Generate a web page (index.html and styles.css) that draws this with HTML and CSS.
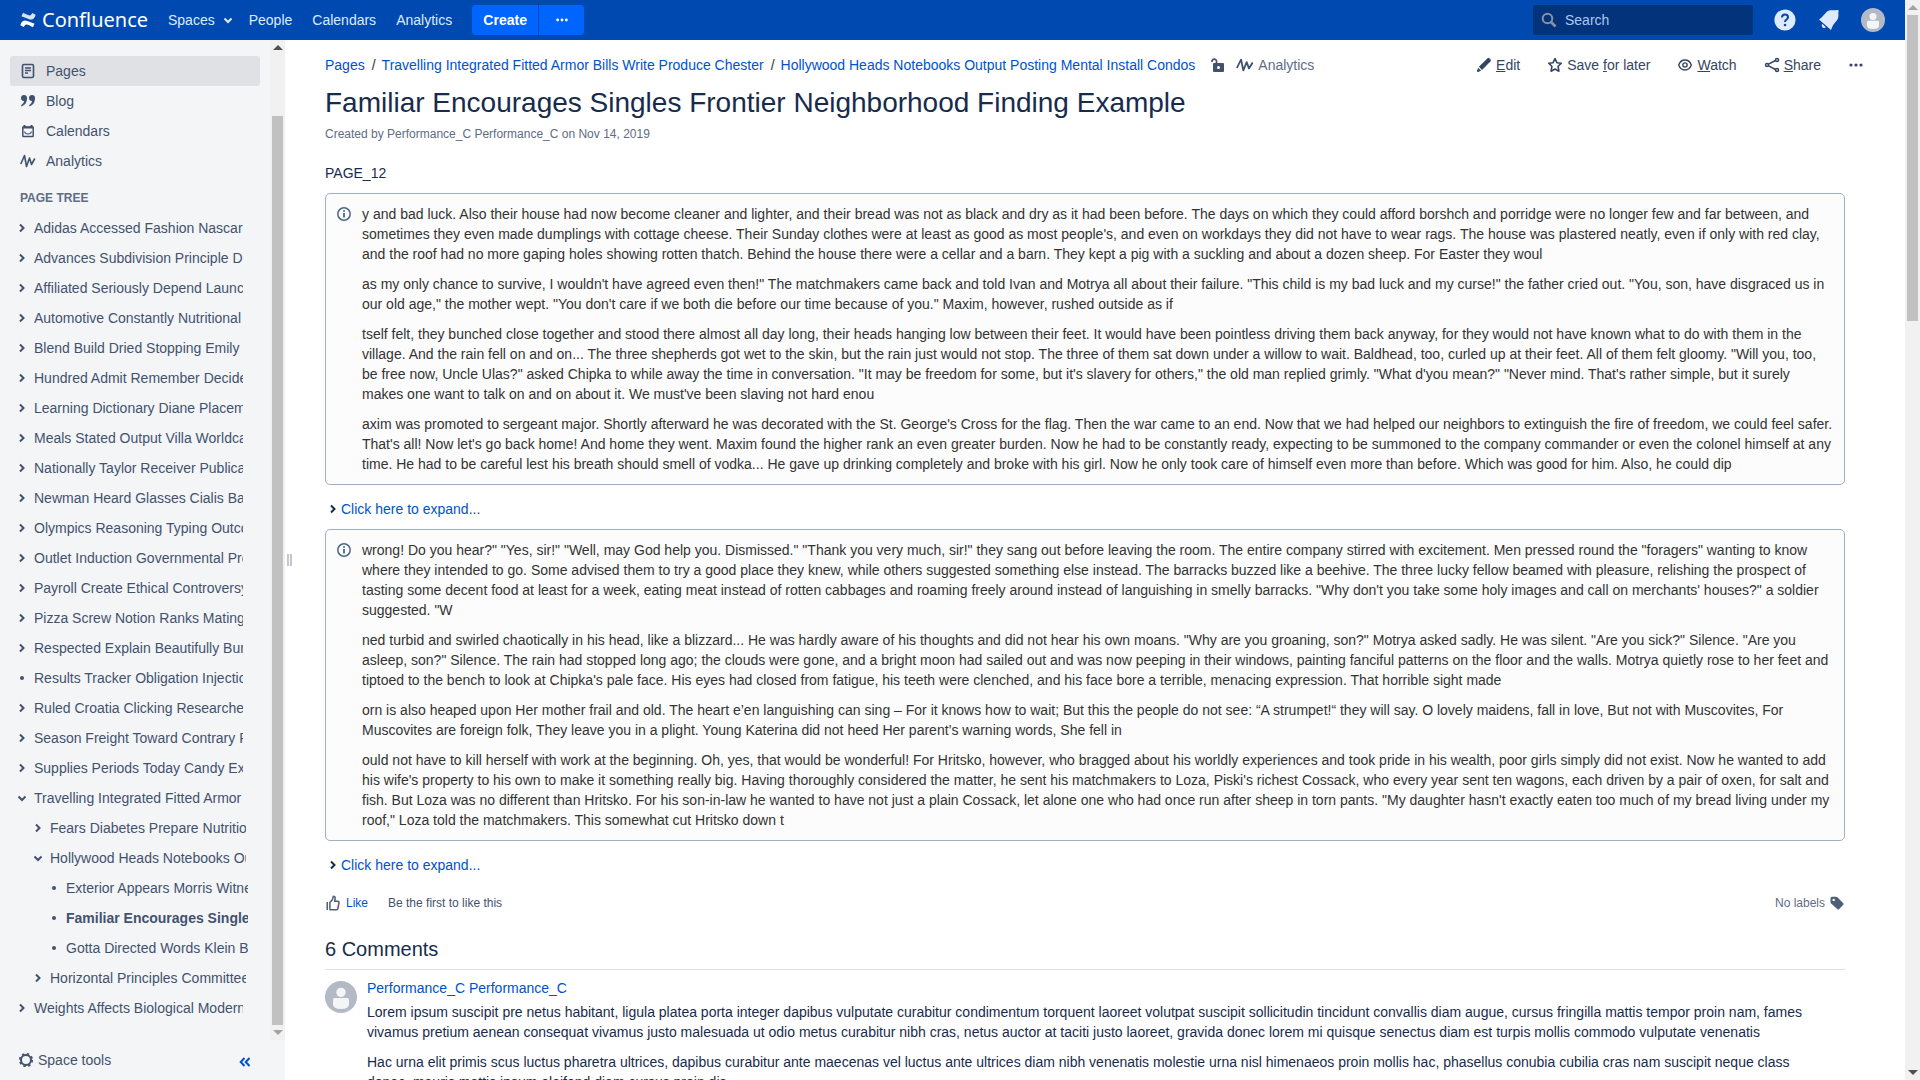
FILE: index.html
```html
<!DOCTYPE html>
<html lang="en">
<head>
<meta charset="utf-8">
<title>Familiar Encourages Singles Frontier Neighborhood Finding Example - Confluence</title>
<link rel="stylesheet" href="styles.css">
</head>
<body>
<svg class="defs" aria-hidden="true">
  <symbol id="right" viewBox="0 0 10 10"><path d="M3 1.5 6.5 5 3 8.5" fill="none" stroke="currentColor" stroke-width="2"/></symbol>
  <symbol id="down" viewBox="0 0 10 10"><path d="M1.5 3.5 5 7 8.5 3.500" fill="none" stroke="currentColor" stroke-width="2"/></symbol>
  <symbol id="dot" viewBox="0 0 10 10"><circle cx="5" cy="5" r="2" fill="currentColor"/></symbol>
  <symbol id="pulse" viewBox="0 0 16 16"><path d="M1 10.500 4.500 2.500 6.500 13.500 9.500 5 11.500 11.500 14.500 6" fill="none" stroke="currentColor" stroke-width="1.600" stroke-linecap="round" stroke-linejoin="round"/></symbol>
  <symbol id="more" viewBox="0 0 16 16"><g fill="currentColor"><circle cx="3" cy="8" r="1.600"/><circle cx="8" cy="8" r="1.600"/><circle cx="13" cy="8" r="1.600"/></g></symbol>
  <symbol id="person" viewBox="0 0 24 24"><circle cx="12" cy="12" r="12" fill="#b3bac5"/><circle cx="12" cy="8.500" r="3.500" fill="#f4f5f7"/><path d="M6 14q0-1.300 1.300-1.300h9.400q1.300 0 1.300 1.300v3.500q0 3.500-6 3.500t-6-3.500z" fill="#f4f5f7"/></symbol>
  <symbol id="info" viewBox="0 0 16 16"><circle cx="8" cy="8" r="6.200" fill="none" stroke="currentColor" stroke-width="1.500"/><path d="M8 7v4.500" stroke="currentColor" stroke-width="1.800"/><circle cx="8" cy="4.900" r="1" fill="currentColor"/></symbol>
</svg>
<div class="app">
<div class="shell">
  <header class="topbar">
    <a class="logo" href="#"><svg width="16" height="16" viewBox="0 0 16 16"><path d="M1 11.200C3 8 5 7.800 8 9.300l6.600 2.500-1.700 3.400C9 13.500 6.500 11.400 4.700 13.500L3.700 15 .4 13.300z" fill="#fff"/><path d="M15 4.800C13 8 11 8.200 8 6.700L1.400 4.200 3.100.8C7 2.500 9.500 4.600 11.300 2.500L12.300 1l3.300 1.700z" fill="#fff" opacity=".85"/></svg><span>Confluence</span></a>
    <nav class="topnav"><a class="spaces" href="#">Spaces <svg width="10" height="10"><use href="#down"/></svg></a><a href="#">People</a><a href="#">Calendars</a><a href="#">Analytics</a></nav>
    <div class="create"><button type="button">Create</button><button type="button" aria-label="Create from template"><svg width="14" height="14"><use href="#more"/></svg></button></div>
    <label class="search"><svg width="16" height="16" viewBox="0 0 16 16"><circle cx="6.500" cy="6.500" r="4.800" fill="none" stroke="currentColor" stroke-width="2"/><path d="m10 10 4.500 4.500" stroke="currentColor" stroke-width="2.600"/></svg><input type="text" placeholder="Search" aria-label="Search"></label>
    <div class="user">
      <a href="#" aria-label="Help"><svg width="24" height="24" viewBox="0 0 24 24"><circle cx="12" cy="12" r="10.600" fill="#deebff"/><path d="M9 9.500C9 7.500 10.200 6.500 12 6.500S15 7.600 15 9.200C15 11.500 12 11.500 12 14" fill="none" stroke="#0049b0" stroke-width="2"/><circle cx="12" cy="17" r="1.300" fill="#0049b0"/></svg></a>
      <a href="#" aria-label="Notifications"><svg width="24" height="24" viewBox="0 0 24 24"><path d="M2 11.500C5.500 9 7 6.500 9.500 4c1.500-1.500 3.500-2 6-1.700 2.500.2 4.500-.6 5.500-.3.800.5.800 1.500.3 2.500.4 4.500.2 6.500-2.800 9.500-2.500 2.500-3.300 5-4.500 8zM5.200 15.800l3.600 3.400q-1.200 1.300-2.800.6-2-1.300-.8-4z" fill="#deebff"/></svg></a>
      <a href="#" aria-label="Profile"><svg width="24" height="24"><use href="#person"/></svg></a>
    </div>
  </header>
  <div class="body">
    <aside class="sidebar">
      <div class="scroller">
        <div class="side">
          <nav class="sections">
            <a class="on" href="#"><svg width="16" height="16" viewBox="0 0 16 16"><rect x="2.500" y="1.500" width="11" height="13" rx="1.500" fill="none" stroke="currentColor" stroke-width="1.600"/><path d="M5 5h6M5 7.500h6M5 10h3" stroke="currentColor" stroke-width="1.300"/></svg>Pages</a>
            <a href="#"><svg width="16" height="16" viewBox="0 0 16 16"><path d="M1 5a3 3 0 1 1 6 0c0 4-1.500 7-5.500 8.500L1 12.300c2-1.300 2.800-2.600 3-4.300A3 3 0 0 1 1 5zm8 0a3 3 0 1 1 6 0c0 4-1.500 7-5.500 8.500L9 12.300c2-1.300 2.800-2.600 3-4.300A3 3 0 0 1 9 5z" fill="currentColor"/></svg>Blog</a>
            <a href="#"><svg width="16" height="16" viewBox="0 0 16 16"><rect x="2.800" y="4" width="10.400" height="9.500" rx=".5" fill="none" stroke="currentColor" stroke-width="1.500"/><path d="M3 4.500h10M4.500 2v3M11.500 2v3" stroke="currentColor" stroke-width="2"/><path d="M4.500 8.500Q5 11 8 11t3.500-2.500" fill="none" stroke="currentColor" stroke-width="1.200"/></svg>Calendars</a>
            <a href="#"><svg width="16" height="16"><use href="#pulse"/></svg>Analytics</a>
          </nav>
          <h2>PAGE TREE</h2>
          <ul class="tree">
            <li><a href="#"><svg><use href="#right"/></svg><span>Adidas Accessed Fashion Nascar</span></a></li>
            <li><a href="#"><svg><use href="#right"/></svg><span>Advances Subdivision Principle D</span></a></li>
            <li><a href="#"><svg><use href="#right"/></svg><span>Affiliated Seriously Depend Launc</span></a></li>
            <li><a href="#"><svg><use href="#right"/></svg><span>Automotive Constantly Nutritional</span></a></li>
            <li><a href="#"><svg><use href="#right"/></svg><span>Blend Build Dried Stopping Emily</span></a></li>
            <li><a href="#"><svg><use href="#right"/></svg><span>Hundred Admit Remember Decide</span></a></li>
            <li><a href="#"><svg><use href="#right"/></svg><span>Learning Dictionary Diane Placem</span></a></li>
            <li><a href="#"><svg><use href="#right"/></svg><span>Meals Stated Output Villa Worldca</span></a></li>
            <li><a href="#"><svg><use href="#right"/></svg><span>Nationally Taylor Receiver Publica</span></a></li>
            <li><a href="#"><svg><use href="#right"/></svg><span>Newman Heard Glasses Cialis Ba</span></a></li>
            <li><a href="#"><svg><use href="#right"/></svg><span>Olympics Reasoning Typing Outco</span></a></li>
            <li><a href="#"><svg><use href="#right"/></svg><span>Outlet Induction Governmental Pro</span></a></li>
            <li><a href="#"><svg><use href="#right"/></svg><span>Payroll Create Ethical Controversy</span></a></li>
            <li><a href="#"><svg><use href="#right"/></svg><span>Pizza Screw Notion Ranks Mating</span></a></li>
            <li><a href="#"><svg><use href="#right"/></svg><span>Respected Explain Beautifully Bur</span></a></li>
            <li><a href="#"><svg><use href="#dot"/></svg><span>Results Tracker Obligation Injectio</span></a></li>
            <li><a href="#"><svg><use href="#right"/></svg><span>Ruled Croatia Clicking Researche</span></a></li>
            <li><a href="#"><svg><use href="#right"/></svg><span>Season Freight Toward Contrary P</span></a></li>
            <li><a href="#"><svg><use href="#right"/></svg><span>Supplies Periods Today Candy Ex</span></a></li>
            <li><a href="#"><svg><use href="#down"/></svg><span>Travelling Integrated Fitted Armor</span></a>
              <ul>
                <li><a href="#"><svg><use href="#right"/></svg><span>Fears Diabetes Prepare Nutritio</span></a></li>
                <li><a href="#"><svg><use href="#down"/></svg><span>Hollywood Heads Notebooks Ou</span></a>
                  <ul>
                    <li><a href="#"><svg><use href="#dot"/></svg><span>Exterior Appears Morris Witne</span></a></li>
                    <li><a class="current" href="#"><svg><use href="#dot"/></svg><span>Familiar Encourages Single</span></a></li>
                    <li><a href="#"><svg><use href="#dot"/></svg><span>Gotta Directed Words Klein B</span></a></li>
                  </ul></li>
                <li><a href="#"><svg><use href="#right"/></svg><span>Horizontal Principles Committee</span></a></li>
              </ul></li>
            <li><a href="#"><svg><use href="#right"/></svg><span>Weights Affects Biological Modern</span></a></li>
          </ul>
        </div>
        <div class="bar side-bar"><i class="up"></i><i class="thumb"></i><i class="dn idle"></i></div>
      </div>
      <footer class="tools">
        <button type="button"><svg width="16" height="16" viewBox="0 0 16 16"><circle cx="8" cy="8" r="5" fill="none" stroke="currentColor" stroke-width="2"/><circle cx="8" cy="8" r="6.300" fill="none" stroke="currentColor" stroke-width="1.600" stroke-dasharray="2.474 2.474"/></svg>Space tools</button>
        <button class="collapse" type="button" aria-label="Collapse sidebar"><svg width="12" height="10" viewBox="0 0 12 10"><path d="M5.500 1 1.700 5l3.800 4M10.500 1 6.700 5l3.800 4" fill="none" stroke="currentColor" stroke-width="2"/></svg></button>
      </footer>
    </aside>
    <div class="splitter"><i></i><i></i></div>
    <main>
      <div class="pagehead">
        <nav class="crumbs"><a href="#">Pages</a><b>/</b><a href="#">Travelling Integrated Fitted Armor Bills Write Produce Chester</a><b>/</b><a href="#">Hollywood Heads Notebooks Output Posting Mental Install Condos</a>
          <a class="lock" href="#" aria-label="Unrestricted"><svg width="16" height="16" viewBox="0 0 16 16"><path d="M2 5V3.700A2.400 2.400 0 0 1 6.500 3.700V7" fill="none" stroke="currentColor" stroke-width="1.700"/><path fill-rule="evenodd" d="M4 6h9q1 0 1 1v7q0 1-1 1H4q-1 0-1-1V7q0-1 1-1zm4.500 3a1.500 1.500 0 1 0 0 3 1.500 1.500 0 0 0 0-3z" fill="currentColor"/></svg></a>
          <a class="stats" href="#"><svg width="18" height="16" viewBox="0 0 16 16" preserveAspectRatio="none"><use href="#pulse"/></svg>Analytics</a></nav>
        <div class="actions">
          <a href="#"><svg width="16" height="16" viewBox="0 0 16 16"><path d="m10.300 2.400 1.200-1.200q.9-.7 1.800 0l1.300 1.300q.7.900 0 1.800l-1.200 1.200L6 12.900l-3.100-3.100zM2.200 10.800l2.900 2.900L2 14.900q-1.200.2-1-1z" fill="currentColor"/></svg><span><u>E</u>dit</span></a>
          <a href="#"><svg width="16" height="16" viewBox="0 0 16 16"><path d="m8 1.600 1.900 4.100 4.400.5-3.200 3.100.8 4.900L8 12l-3.900 2.200.8-4.900L1.700 6.200l4.400-.5z" fill="none" stroke="currentColor" stroke-width="1.600" stroke-linejoin="round"/></svg><span>Save <u>f</u>or later</span></a>
          <a href="#"><svg width="16" height="16" viewBox="0 0 16 16"><path d="M1.700 8Q3.500 3 8 3t6.300 5Q12.500 13 8 13T1.700 8z" fill="none" stroke="currentColor" stroke-width="1.400"/><circle cx="8" cy="8" r="2.100" fill="none" stroke="currentColor" stroke-width="1.400"/></svg><span><u>W</u>atch</span></a>
          <a href="#"><svg width="16" height="16" viewBox="0 0 16 16"><g fill="none" stroke="currentColor" stroke-width="1.500"><path d="m4.500 7.200 7-3.700m-7 5.300 7 3.700"/><circle cx="3" cy="8" r="1.500"/><circle cx="13" cy="3" r="1.500"/><circle cx="13" cy="13" r="1.500"/></g></svg><span><u>S</u>hare</span></a>
          <button type="button" aria-label="More actions"><svg width="16" height="16"><use href="#more"/></svg></button>
        </div>
      </div>
      <h1>Familiar Encourages Singles Frontier Neighborhood Finding Example</h1>
      <p class="meta">Created by Performance_C Performance_C on Nov 14, 2019</p>
      <p class="intro">PAGE_12</p>
      <section class="panel"><svg width="16" height="16"><use href="#info"/></svg><div>
        <p>y and bad luck. Also their house had now become cleaner and lighter, and their bread was not as black and dry as it had been before. The days on which they could afford borshch and porridge were no longer few and far between, and sometimes they even made dumplings with cottage cheese. Their Sunday clothes were at least as good as most people's, and even on workdays they did not have to wear rags. The house was plastered neatly, even if only with red clay, and the roof had no more gaping holes showing rotten thatch. Behind the house there were a cellar and a barn. They kept a pig with a suckling and about a dozen sheep. For Easter they woul</p>
        <p>as my only chance to survive, I wouldn't have agreed even then!" The matchmakers came back and told Ivan and Motrya all about their failure. "This child is my bad luck and my curse!" the father cried out. "You, son, have disgraced us in our old age," the mother wept. "You don't care if we both die before our time because of you." Maxim, however, rushed outside as if</p>
        <p>tself felt, they bunched close together and stood there almost all day long, their heads hanging low between their feet. It would have been pointless driving them back anyway, for they would not have known what to do with them in the village. And the rain fell on and on... The three shepherds got wet to the skin, but the rain just would not stop. The three of them sat down under a willow to wait. Baldhead, too, curled up at their feet. All of them felt gloomy. "Will you, too, be free now, Uncle Ulas?" asked Chipka to while away the time in conversation. "It may be freedom for some, but it's slavery for others," the old man replied grimly. "What d'you mean?" "Never mind. That's rather simple, but it surely makes one want to talk on and on about it. We must've been slaving not hard enou</p>
        <p>axim was promoted to sergeant major. Shortly afterward he was decorated with the St. George's Cross for the flag. Then the war came to an end. Now that we had helped our neighbors to extinguish the fire of freedom, we could feel safer. That's all! Now let's go back home! And home they went. Maxim found the higher rank an even greater burden. Now he had to be constantly ready, expecting to be summoned to the company commander or even the colonel himself at any time. He had to be careful lest his breath should smell of vodka... He gave up drinking completely and broke with his girl. Now he only took care of himself even more than before. Which was good for him. Also, he could dip</p>
      </div></section>
      <button class="expand" type="button"><svg width="10" height="10"><use href="#right"/></svg>Click here to expand...</button>
      <section class="panel"><svg width="16" height="16"><use href="#info"/></svg><div>
        <p>wrong! Do you hear?" "Yes, sir!" "Well, may God help you. Dismissed." "Thank you very much, sir!" they sang out before leaving the room. The entire company stirred with excitement. Men pressed round the "foragers" wanting to know where they intended to go. Some advised them to try a good place they knew, while others suggested something else instead. The barracks buzzed like a beehive. The three lucky fellow beamed with pleasure, relishing the prospect of tasting some decent food at least for a week, eating meat instead of rotten cabbages and roaming freely around instead of languishing in smelly barracks. "Why don't you take some holy images and call on merchants' houses?" a soldier suggested. "W</p>
        <p>ned turbid and swirled chaotically in his head, like a blizzard... He was hardly aware of his thoughts and did not hear his own moans. "Why are you groaning, son?" Motrya asked sadly. He was silent. "Are you sick?" Silence. "Are you asleep, son?" Silence. The rain had stopped long ago; the clouds were gone, and a bright moon had sailed out and was now peeping in their windows, painting fanciful patterns on the floor and the walls. Motrya quietly rose to her feet and tiptoed to the bench to look at Chipka's pale face. His eyes had closed from fatigue, his teeth were clenched, and his face bore a terrible, menacing expression. That horrible sight made</p>
        <p>orn is also heaped upon Her mother frail and old. The heart e’en languishing can sing – For it knows how to wait; But this the people do not see: “A strumpet!“ they will say. O lovely maidens, fall in love, But not with Muscovites, For Muscovites are foreign folk, They leave you in a plight. Young Katerina did not heed Her parent’s warning words, She fell in</p>
        <p>ould not have to kill herself with work at the beginning. Oh, yes, that would be wonderful! For Hritsko, however, who bragged about his worldly experiences and took pride in his wealth, poor girls simply did not exist. Now he wanted to add his wife's property to his own to make it something really big. Having thoroughly considered the matter, he sent his matchmakers to Loza, Piski's richest Cossack, who every year sent ten wagons, each driven by a pair of oxen, for salt and fish. But Loza was no different than Hritsko. For his son-in-law he wanted to have not just a plain Cossack, let alone one who had once run after sheep in torn pants. "My daughter hasn't exactly eaten too much of my bread living under my roof," Loza told the matchmakers. This somewhat cut Hritsko down t</p>
      </div></section>
      <button class="expand" type="button"><svg width="10" height="10"><use href="#right"/></svg>Click here to expand...</button>
      <div class="likes">
        <a href="#"><svg width="16" height="16" viewBox="0 0 16 18"><path d="M1.500 8v9M4.500 16V8.500L7.500 5l.8-3.500q2.200 0 2.200 2.300L9.800 7h3.700q1.500.2 1.200 1.700l-1.200 6.500q-.3 1.300-1.500 1.300H5q-.5 0-.5-.5z" fill="none" stroke="currentColor" stroke-width="1.700" stroke-linejoin="round"/></svg>Like</a>
        <span>Be the first to like this</span>
        <span class="labels">No labels <svg width="16" height="16" viewBox="0 0 16 16"><path fill-rule="evenodd" d="M1.500 3.200Q1.500 1.700 3 1.700h4q.8 0 1.400.6l5.700 5.700q1 1 0 2l-3.900 3.900q-1 1-2 0L2.100 8.600q-.6-.6-.6-1.400zM4.700 3.700a1.200 1.200 0 1 0 0 2.400 1.200 1.200 0 0 0 0-2.400z" fill="currentColor"/></svg></span>
      </div>
      <h2 class="count">6 Comments</h2>
      <article class="comment"><svg width="32" height="32" viewBox="0 0 24 24"><use href="#person"/></svg><div>
        <a href="#">Performance_C Performance_C</a>
        <p>Lorem ipsum suscipit pre netus habitant, ligula platea porta integer dapibus vulputate curabitur condimentum torquent laoreet volutpat suscipit sollicitudin tincidunt convallis diam augue, cursus fringilla mattis tempor proin nam, fames vivamus pretium aenean consequat vivamus justo malesuada ut odio metus curabitur nibh cras, netus auctor at taciti justo laoreet, gravida donec lorem mi quisque senectus diam est turpis mollis commodo vulputate venenatis</p>
        <p>Hac urna elit primis scus luctus pharetra ultrices, dapibus curabitur ante maecenas vel luctus ante ultrices diam nibh venenatis molestie urna nisl himenaeos proin mollis hac, phasellus conubia cubilia cras nam suscipit neque class donec, mauris mattis ipsum eleifend diam cursus proin dis</p>
      </div></article>
    </main>
  </div>
</div>
<div class="bar page-bar"><i class="up idle"></i><i class="thumb"></i><i class="dn"></i></div>
</div>
</body>
</html>
```
FILE: styles.css
```css
* { box-sizing: border-box; }
body { margin: 0; background: #fff; color: #172b4d; font: 14px/20px "Liberation Sans", Arial, sans-serif; }
p, h1, h2, ul { margin: 0; padding: 0; font-weight: 400; }
ul { list-style: none; }
a { color: #0052cc; text-decoration: none; }
button { border: 0; padding: 0; background: none; font: inherit; color: inherit; }
svg { flex: none; }
.defs { display: none; }
.app { display: flex; height: 100vh; overflow: hidden; }
.shell { flex: 1; min-width: 0; display: flex; flex-direction: column; }

/* Header */
.topbar { flex: none; display: flex; align-items: center; height: 40px; padding: 0 20px; background: #0049b0; }
.logo { display: flex; align-items: center; gap: 6px; width: 148px; color: #fff; font: 20px/24px "Noto Sans", sans-serif; }
.topnav { display: flex; gap: 20px; }
.topnav a { display: flex; align-items: center; color: #deebff; }
.topnav .spaces { gap: 8px; margin-right: -4px; }
.create { display: flex; gap: 1px; margin-left: 20px; }
.create button { display: grid; place-items: center; width: 45px; height: 30px; background: #0065ff; color: #fff; border-radius: 0 3px 3px 0; }
.create button:first-child { width: 66px; font-weight: 700; border-radius: 3px 0 0 3px; }
.search { display: flex; align-items: center; gap: 8px; width: 220px; height: 30px; margin-left: auto; padding: 0 8px; border-radius: 3px; background: #03337a; color: #8792a5; }
.search input { flex: 1; min-width: 0; border: 0; padding: 0; background: none; color: #b3d4ff; font: inherit; }
.search input::placeholder { color: #abc8f2; opacity: 1; }
.user { display: flex; gap: 20px; margin-left: 20px; }
.user a { display: flex; }

/* Sidebar */
.body { flex: 1; min-height: 0; display: flex; }
.sidebar { flex: none; display: flex; flex-direction: column; width: 285px; background: #f4f5f7; color: #42526e; }
.scroller { flex: 1; min-height: 0; display: flex; overflow: hidden; }
.side { flex: 1; min-width: 0; padding: 16px 10px 0; }
.sections a { display: flex; align-items: center; gap: 10px; height: 30px; padding: 0 10px; border-radius: 3px; color: #42526e; }
.sections .on { background: #dfe1e5; }
.side h2 { padding: 12px 10px 5px; color: #5e6c84; font-size: 12px; font-weight: 700; }
.tree a { display: flex; align-items: center; gap: 7px; height: 30px; padding-left: 7px; color: #42526e; }
.tree svg { width: 10px; height: 10px; }
.tree span { width: 209px; overflow: hidden; white-space: nowrap; }
.tree ul { padding-left: 16px; }
.tree ul span { width: 196px; }
.tree ul ul span { width: 182px; }
.tree .current { font-weight: 700; }
.tools { display: flex; justify-content: space-between; height: 40px; padding: 0 34px 0 18px; }
.tools button { display: flex; align-items: center; gap: 4px; }
.tools .collapse { padding-top: 4px; color: #0052cc; }
.splitter { flex: none; display: flex; align-items: center; justify-content: center; gap: 1px; width: 9px; }
.splitter i { width: 2px; height: 12px; background: #c1c7d0; }

/* Scroll bars */
.bar { flex: none; display: flex; flex-direction: column; align-items: center; width: 15px; padding: 5px 0; background: #f1f1f1; }
.bar i { width: 0; border: 5px solid transparent; }
.bar .up { margin-bottom: 5px; border-top-width: 0; border-bottom-color: #505050; }
.bar .dn { margin-top: 5px; border-bottom-width: 0; border-top-color: #505050; }
.bar .up.idle { border-bottom-color: #a3a3a3; }
.bar .dn.idle { border-top-color: #a3a3a3; }
.bar .thumb { width: 11px; border: 0; background: #c1c1c1; }
.side-bar .up { margin-bottom: 66px; }
.side-bar .thumb { flex: 1; }
.page-bar .thumb { height: 306px; }
.page-bar .dn { margin-top: auto; }

/* Page */
main { flex: 1; min-width: 0; padding: 15px 60px 0 31px; overflow: hidden; }
.pagehead { display: flex; justify-content: space-between; height: 20px; margin-right: -19px; }
.crumbs, .actions, .crumbs a, .actions a, .actions button { display: flex; align-items: center; }
.crumbs b { padding: 0 6px 0 7px; font-weight: 400; color: #333; }
.crumbs .lock { margin: 0 10px 0 15px; color: #42526e; }
.crumbs .stats { gap: 4px; color: #5e6c84; }
.crumbs .stats svg { color: #42526e; }
.actions { gap: 27px; color: #344563; }
.actions a { gap: 4px; color: #344563; }
h1 { margin-top: 13px; font-size: 28px; line-height: 30px; }
.meta { margin-top: 6px; color: #5e6c84; font-size: 12px; }
.intro { margin-top: 19px; }
.panel { display: flex; gap: 10px; margin-top: 10px; padding: 10px; border: 1px solid #a0b0c4; border-radius: 5px; background: #fcfcfc; color: #333; }
.panel svg { margin-top: 2px; color: #4a6785; }
.panel p + p { margin-top: 10px; }
.expand { display: flex; align-items: center; gap: 3px; margin: 14px 0 10px; padding-left: 3px; color: #0052cc; }
.expand svg { color: #172b4d; }
.likes { display: flex; align-items: center; gap: 20px; height: 20px; margin-top: 18px; color: #42526e; font-size: 12px; }
.likes a, .labels { display: flex; align-items: center; gap: 5px; }
.likes a svg, .labels svg { color: #505f79; }
.labels { gap: 4px; margin-left: auto; color: #5e6c84; }
.count { margin-top: 24px; padding-bottom: 8px; border-bottom: 1px solid #dfe1e6; font-size: 20px; line-height: 24px; }
.comment { display: flex; gap: 10px; margin-top: 8px; padding-right: 20px; }
.comment > svg { margin-top: 3px; }
.comment a { display: block; margin-bottom: 4px; }
.comment p { margin-bottom: 10px; }
```
